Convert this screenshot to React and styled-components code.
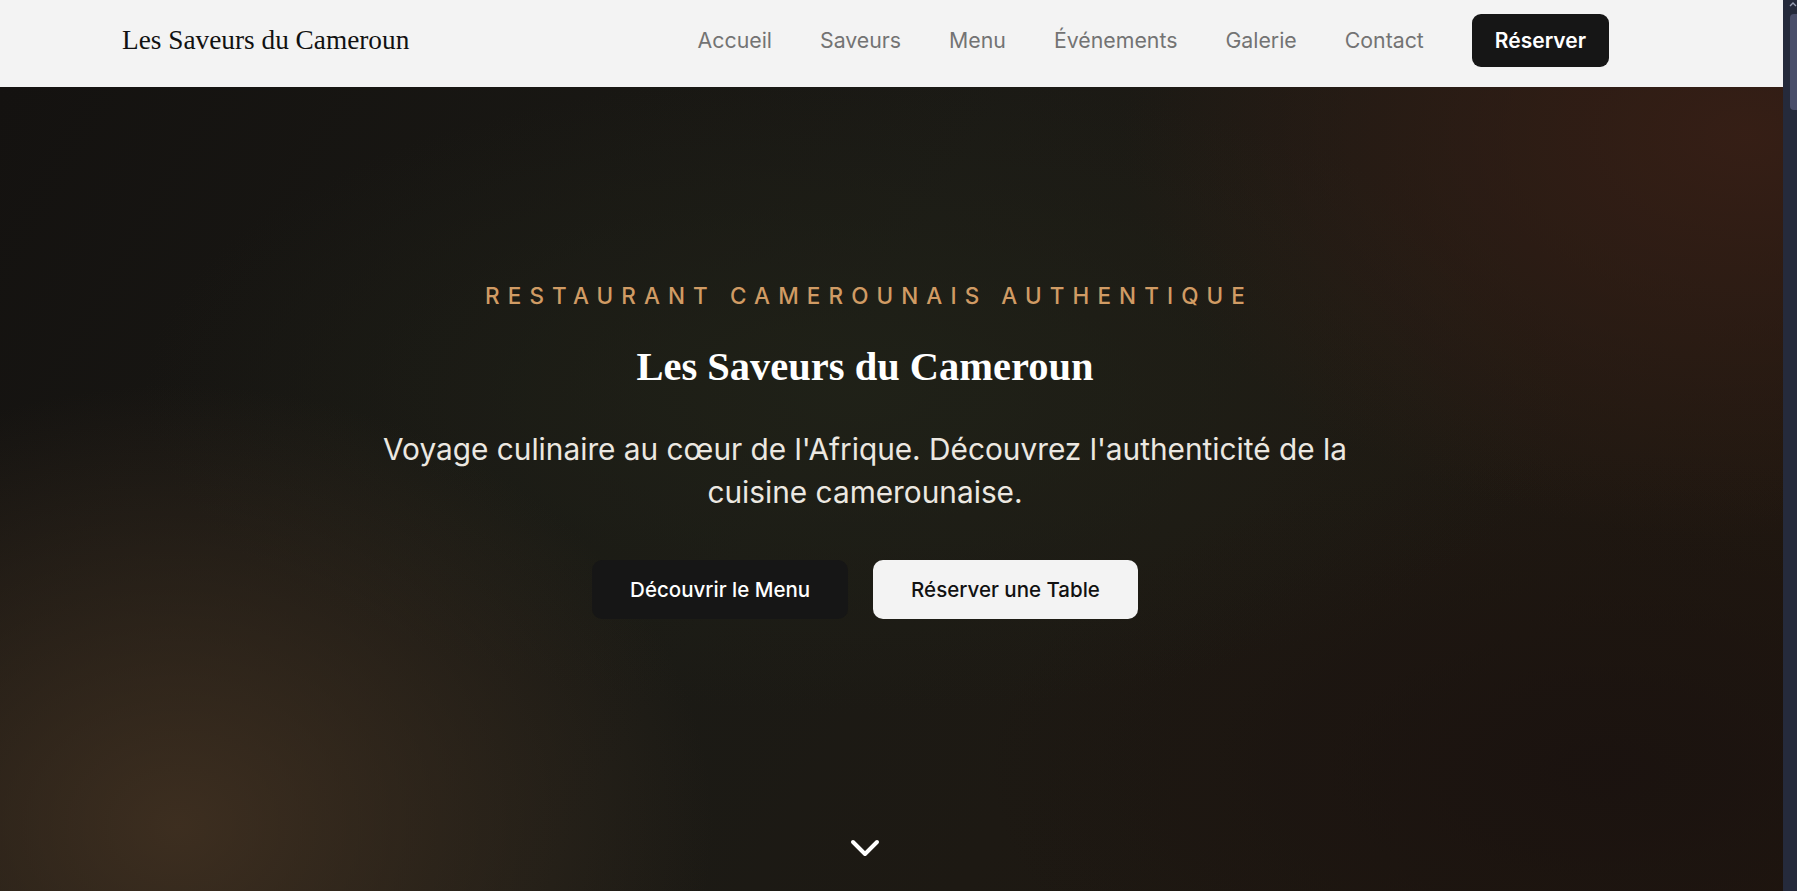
import React from "react";
import styled, { createGlobalStyle } from "styled-components";
import { ChevronDown } from "lucide-react";

const GlobalStyle = createGlobalStyle`
  html, body {
    margin: 0;
    padding: 0;
    background: #141210;
    overflow: hidden;
  }
  body {
    font-family: Inter, "Noto Sans", sans-serif;
  }
`

const Shell = styled.div`
  display: flex;
  height: 891px;
  overflow: hidden;
`

const Main = styled.div`
  flex: 1;
  min-width: 0;
  display: flex;
  flex-direction: column;
`

const ScrollRail = styled.div`
  width: 14px;
  flex-shrink: 0;
  background: #252a3b;
  display: flex;
  flex-direction: column;
  align-items: flex-end;
  overflow: hidden;
`

const RailArrow = styled.svg`
  display: block;
  margin: 1px 0 0;
  width: 8px;
  height: 6px;
`

const RailThumb = styled.div`
  margin-top: 7px;
  width: 7px;
  height: 96px;
  background: #4a4e6a;
  border-radius: 4px 0 0 4px;
`

const Header = styled.header`
  height: 87px;
  box-sizing: border-box;
  background: #f3f3f3;
  display: flex;
  align-items: center;
  justify-content: space-between;
  padding: 0 174px 7px 122px;
`

const Logo = styled.a`
  font-family: "Liberation Serif", "DejaVu Serif", serif;
  font-size: 27.3px;
  color: #111;
  text-decoration: none;
`

const Nav = styled.nav`
  display: flex;
  align-items: center;
  gap: 48px;
`

const NavLink = styled.a`
  font-size: 21.3px;
  color: #737373;
  text-decoration: none;
`

const HeaderButton = styled.button`
  font-family: Inter, sans-serif;
  font-size: 21px;
  font-weight: 600;
  color: #fff;
  background: #161616;
  border: none;
  border-radius: 9px;
  height: 53px;
  padding: 0 23px;
`

const Hero = styled.section`
  position: relative;
  flex: 1;
  display: flex;
  flex-direction: column;
  align-items: center;
  padding: 193px 53px 0 0;
  text-align: center;
  background:
    radial-gradient(ellipse 30% 55% at 10% 92%, rgba(70, 52, 35, 0.8), transparent 100%),
    radial-gradient(ellipse 35% 50% at 98% 6%, rgba(56, 31, 22, 0.9), transparent 100%),
    radial-gradient(ellipse 40% 40% at 48% 38%, rgba(32, 34, 24, 0.85), transparent 100%),
    radial-gradient(ellipse 35% 40% at 90% 85%, rgba(26, 18, 15, 0.9), transparent 100%),
    linear-gradient(120deg, #141210 0%, #1b1a15 45%, #21170f 100%);
`

const Eyebrow = styled.p`
  margin: 0;
  font-size: 22.5px;
  line-height: 32px;
  font-weight: 500;
  letter-spacing: 0.36em;
  margin-right: -0.36em;
  color: #d09b64;
`

const Title = styled.h1`
  margin: 29px 0 0;
  font-family: "Liberation Serif", "DejaVu Serif", serif;
  font-weight: 700;
  font-size: 40.5px;
  line-height: 52px;
  color: #fff;
`

const Subtitle = styled.p`
  margin: 35px 0 0;
  max-width: 1010px;
  font-size: 29.8px;
  line-height: 43px;
  color: #ece8e1;
`

const Actions = styled.div`
  display: flex;
  gap: 25px;
  margin-top: 46px;
`

const CtaButton = styled.button`
  font-family: Inter, sans-serif;
  font-size: 20.5px;
  font-weight: 500;
  height: 59px;
  padding: 0 38px;
  border: none;
  border-radius: 10px;
  color: ${(p) => (p.$light ? "#111" : "#fff")};
  background: ${(p) => (p.$light ? "#f3f3f3" : "#161616")};
`

const ScrollHint = styled.div`
  position: absolute;
  bottom: 19px;
  left: 0;
  right: 53px;
  display: flex;
  justify-content: center;
  color: #fff;
`

export default function App() {
  const links = ["Accueil", "Saveurs", "Menu", "Événements", "Galerie", "Contact"];
  return (
    <Shell>
      <GlobalStyle />
      <Main>
        <Header>
          <Logo href="#">Les Saveurs du Cameroun</Logo>
          <Nav>
            {links.map((l) => (
              <NavLink key={l} href="#">{l}</NavLink>
            ))}
            <HeaderButton>Réserver</HeaderButton>
          </Nav>
        </Header>
        <Hero>
          <Eyebrow>RESTAURANT CAMEROUNAIS AUTHENTIQUE</Eyebrow>
          <Title>Les Saveurs du Cameroun</Title>
          <Subtitle>
            Voyage culinaire au cœur de l'Afrique. Découvrez l'authenticité de la cuisine camerounaise.
          </Subtitle>
          <Actions>
            <CtaButton>Découvrir le Menu</CtaButton>
            <CtaButton $light>Réserver une Table</CtaButton>
          </Actions>
          <ScrollHint>
            <ChevronDown size={48} strokeWidth={2} />
          </ScrollHint>
        </Hero>
      </Main>
      <ScrollRail>
        <RailArrow viewBox="0 0 8 6">
          <path d="M1 5 L4 2 L7 5" fill="none" stroke="#9aa0b4" strokeWidth="1.4" />
        </RailArrow>
        <RailThumb />
      </ScrollRail>
    </Shell>
  );
}
